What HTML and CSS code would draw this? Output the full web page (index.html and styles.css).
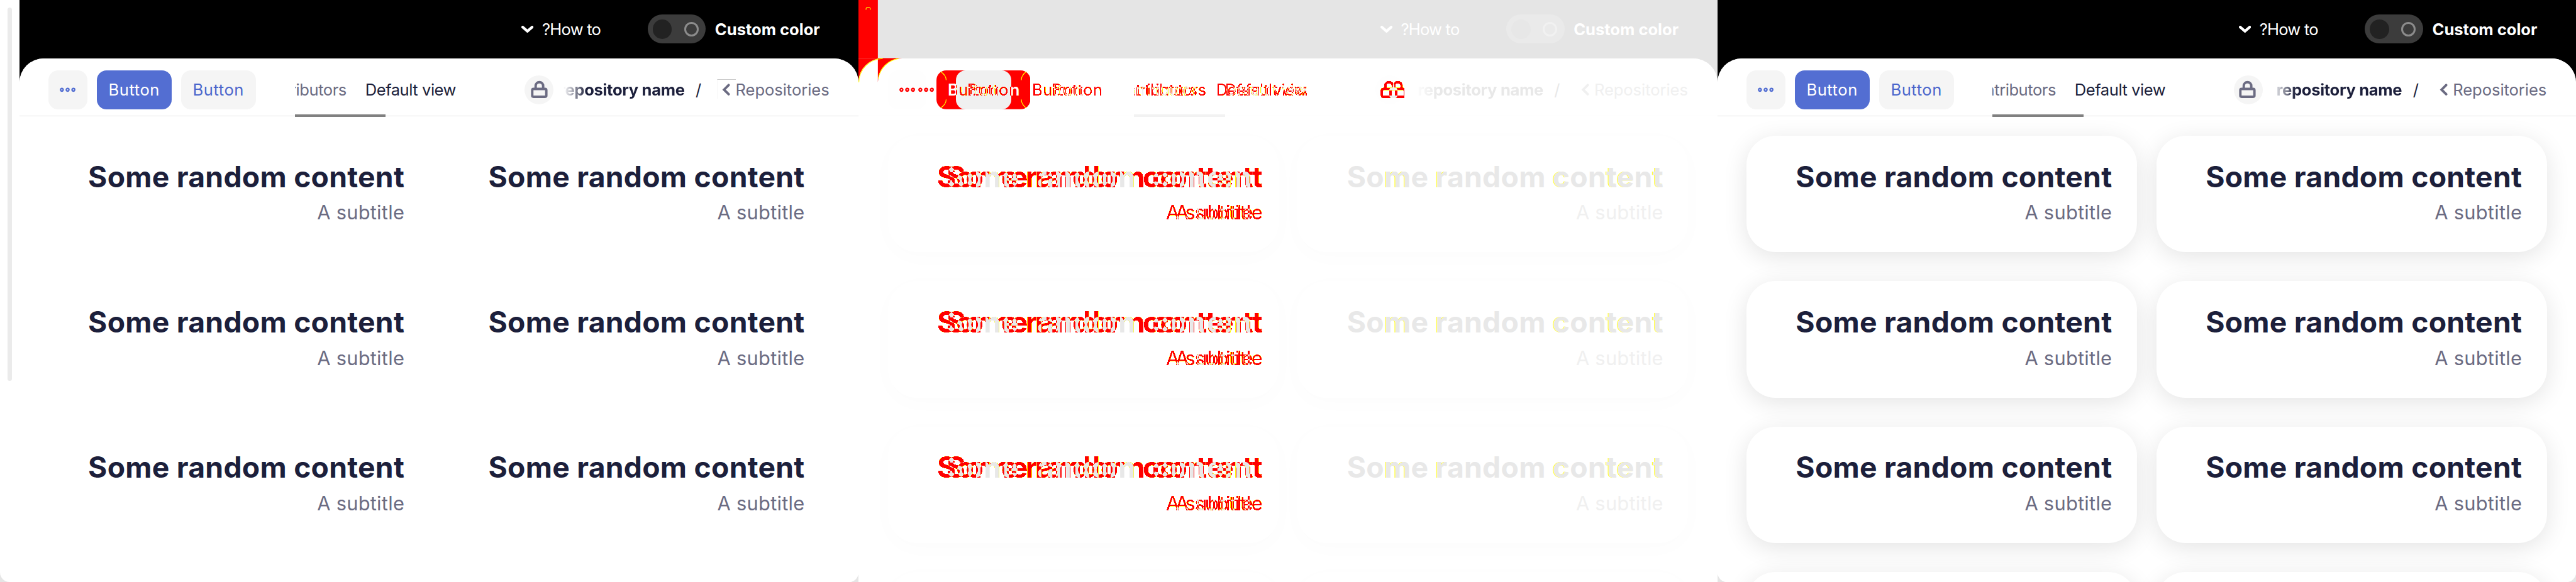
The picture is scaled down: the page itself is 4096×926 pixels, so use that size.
FILE: index.html
```html
<!DOCTYPE html>
<html lang="en">
<head>
<meta charset="utf-8">
<title>Layout comparison</title>
<link rel="stylesheet" href="styles.css">
</head>
<body>
<svg class="defs" width="0" height="0" aria-hidden="true">
  <defs>
    <symbol id="down" viewBox="0 0 20 12"><path d="M2.2 2.2L10 9L17.8 2.2" fill="none" stroke="currentColor" stroke-width="4.4" stroke-linecap="round"/></symbol>
    <symbol id="back" viewBox="0 0 14 20"><path d="M11 2.4L3.4 10L11 17.6" fill="none" stroke="currentColor" stroke-width="4" stroke-linecap="round"/></symbol>
    <symbol id="lock" viewBox="0 0 28 30"><path d="M8 13V9a6.2 6.2 0 0 1 12.4 0v4" fill="none" stroke="currentColor" stroke-width="4"/><rect x="2.4" y="14" width="23.2" height="13" rx="2" fill="none" stroke="currentColor" stroke-width="4"/></symbol>
    <symbol id="dots" viewBox="0 0 26 8"><g fill="none" stroke="currentColor" stroke-width="2.4"><circle cx="3.5" cy="4" r="2.2"/><circle cx="13" cy="4" r="2.2"/><circle cx="22.5" cy="4" r="2.2"/></g></symbol>
    <filter id="g14" x="-20%" y="-30%" width="160%" height="160%" color-interpolation-filters="sRGB">
      <feOffset in="SourceAlpha" dx="13.5" result="b"/><feComposite in="SourceAlpha" in2="b" operator="xor" result="x"/>
      <feComponentTransfer in="x" result="xe"><feFuncA type="discrete" tableValues="0 0 1 1 1"/></feComponentTransfer><feFlood flood-color="#ff0"/><feComposite in2="xe" operator="in" result="y"/>
      <feComponentTransfer in="x" result="xs"><feFuncA type="discrete" tableValues="0 0 0 1 1"/></feComponentTransfer><feFlood flood-color="#f00"/><feComposite in2="xs" operator="in" result="r"/>
      <feComposite in="SourceAlpha" in2="b" operator="in" result="i"/><feFlood flood-color="#f0f0f0"/><feComposite in2="i" operator="in" result="o"/>
      <feMerge><feMergeNode in="y"/><feMergeNode in="r"/><feMergeNode in="o"/></feMerge>
    </filter>
    <filter id="g16" x="-20%" y="-30%" width="160%" height="160%" color-interpolation-filters="sRGB">
      <feOffset in="SourceAlpha" dx="15.4" result="b"/><feComposite in="SourceAlpha" in2="b" operator="xor" result="x"/>
      <feComponentTransfer in="x" result="xe"><feFuncA type="discrete" tableValues="0 0 1 1 1"/></feComponentTransfer><feFlood flood-color="#ff0"/><feComposite in2="xe" operator="in" result="y"/>
      <feComponentTransfer in="x" result="xs"><feFuncA type="discrete" tableValues="0 0 0 1 1"/></feComponentTransfer><feFlood flood-color="#f00"/><feComposite in2="xs" operator="in" result="r"/>
      <feComposite in="SourceAlpha" in2="b" operator="in" result="i"/><feFlood flood-color="#e8e8e8"/><feComposite in2="i" operator="in" result="o"/>
      <feMerge><feMergeNode in="y"/><feMergeNode in="r"/><feMergeNode in="o"/></feMerge>
    </filter>
    <filter id="g32" x="-20%" y="-30%" width="180%" height="160%" color-interpolation-filters="sRGB">
      <feOffset in="SourceAlpha" dx="30.9" result="b"/><feComposite in="SourceAlpha" in2="b" operator="xor" result="x"/>
      <feComponentTransfer in="x" result="xe"><feFuncA type="discrete" tableValues="0 0 1 1 1"/></feComponentTransfer><feFlood flood-color="#ff0"/><feComposite in2="xe" operator="in" result="y"/>
      <feComponentTransfer in="x" result="xs"><feFuncA type="discrete" tableValues="0 0 0 1 1"/></feComponentTransfer><feFlood flood-color="#f00"/><feComposite in2="xs" operator="in" result="r"/>
      <feComposite in="SourceAlpha" in2="b" operator="in" result="i"/><feFlood flood-color="#f8f8f8"/><feComposite in2="i" operator="in" result="o"/>
      <feMerge><feMergeNode in="y"/><feMergeNode in="r"/><feMergeNode in="o"/></feMerge>
    </filter>
  </defs>
</svg>

<main class="board">
  <section class="panel before">
    <div class="gutter"><div class="thumb"></div></div>
    <div class="frame">
      <header class="top">
        <svg class="i-down"><use href="#down"/></svg><span class="howto">?How to</span>
        <span class="toggle"><i class="knob"></i><i class="ring"></i></span><b class="custom">Custom color</b>
      </header>
      <div class="surface">
        <nav class="bar">
          <span class="btn more"><svg class="i-dots"><use href="#dots"/></svg></span>
          <span class="btn primary">Button</span>
          <span class="btn">Button</span>
          <div class="tabs"><div class="clip"><span class="tab muted">Contributors</span><span class="tab deft">Default view</span></div><i class="mark"></i></div>
          <span class="badge"><svg class="i-lock"><use href="#lock"/></svg></span>
          <div class="repo"><b>repository name</b></div>
          <span class="slash">/</span>
          <span class="crumb"><i class="trace"></i><svg class="i-back"><use href="#back"/></svg>Repositories</span>
        </nav>
        <div class="grid">
          <article class="card"><h2>Some random content</h2><p>A subtitle</p></article>
          <article class="card"><h2>Some random content</h2><p>A subtitle</p></article>
          <article class="card"><h2>Some random content</h2><p>A subtitle</p></article>
          <article class="card"><h2>Some random content</h2><p>A subtitle</p></article>
          <article class="card"><h2>Some random content</h2><p>A subtitle</p></article>
          <article class="card"><h2>Some random content</h2><p>A subtitle</p></article>
        </div>
      </div>
    </div>
  </section>

  <section class="panel diff">
    <svg class="strip" viewBox="0 0 72 136">
      <path d="M0 0H32V96H0z" fill="#f00"/>
      <path d="M0 96H40A40 40 0 0 0 0 136z" fill="#f00"/>
      <path d="M32 96H72A40 40 0 0 0 32 136V96.8z" fill="#f00"/>
      <path d="M0.6 136A40 40 0 0 1 40 96.6M32.6 130A40 40 0 0 1 66 96.6M12.5 16V14.5Q12.5 12.6 14.5 12.6H17.5Q19.5 12.6 19.5 14.5V16" fill="none" stroke="#ff0" stroke-width="1.2"/>
    </svg>
    <div class="frame">
      <header class="top">
        <svg class="i-down"><use href="#down"/></svg><span class="howto">?How to</span>
        <span class="toggle"><i class="knob"></i><i class="ring"></i></span><b class="custom">Custom color</b>
      </header>
      <div class="surface">
        <nav class="bar">
          <span class="btn more"><svg class="i-dots"><use href="#dots"/></svg></span>
          <span class="btn primary"><svg class="union" viewBox="0 0 155 64"><rect width="155" height="64" rx="16" fill="#f00"/><path d="M7 2Q16 8 16 16M16 48Q16 56 7 62M148 2Q140 8 140 16M140 48Q140 56 148 62" fill="none" stroke="#ff0" stroke-width="1.2"/></svg><span class="white one">Button</span><span class="white two">Button</span><span class="overlap"><span class="ghost32">Button</span></span></span>
          <span class="btn"><span class="ghost32">Button</span></span>
          <div class="tabs"><div class="clip"><span class="tab muted ghost14">Contributors</span><span class="tab deft ghost14">Default view</span></div><i class="mark"></i></div>
          <span class="badge"><svg class="i-lock ghost14"><use href="#lock"/></svg></span>
          <div class="repo"><b>repository name</b></div>
          <span class="slash">/</span>
          <span class="crumb"><svg class="i-back"><use href="#back"/></svg>Repositories</span>
        </nav>
        <div class="grid">
          <article class="card"><h2 class="ghost16">Some random content</h2><p class="ghost16">A subtitle</p></article>
          <article class="card"><h2>So<em>m</em>e <em>r</em>andom <em>c</em>on<em>te</em>n<em>t</em></h2><p>A subtitle</p></article>
          <article class="card"><h2 class="ghost16">Some random content</h2><p class="ghost16">A subtitle</p></article>
          <article class="card"><h2>So<em>m</em>e <em>r</em>andom <em>c</em>on<em>te</em>n<em>t</em></h2><p>A subtitle</p></article>
          <article class="card"><h2 class="ghost16">Some random content</h2><p class="ghost16">A subtitle</p></article>
          <article class="card"><h2>So<em>m</em>e <em>r</em>andom <em>c</em>on<em>te</em>n<em>t</em></h2><p>A subtitle</p></article>
          <article class="card"></article>
          <article class="card"></article>
        </div>
      </div>
    </div>
  </section>

  <section class="panel after">
    <div class="frame">
      <header class="top">
        <svg class="i-down"><use href="#down"/></svg><span class="howto">?How to</span>
        <span class="toggle"><i class="knob"></i><i class="ring"></i></span><b class="custom">Custom color</b>
      </header>
      <div class="surface">
        <nav class="bar">
          <span class="btn more"><svg class="i-dots"><use href="#dots"/></svg></span>
          <span class="btn primary">Button</span>
          <span class="btn">Button</span>
          <div class="tabs"><div class="clip"><span class="tab muted">Contributors</span><span class="tab deft">Default view</span></div><i class="mark"></i></div>
          <span class="badge"><svg class="i-lock"><use href="#lock"/></svg></span>
          <div class="repo"><b>repository name</b></div>
          <span class="slash">/</span>
          <span class="crumb"><svg class="i-back"><use href="#back"/></svg>Repositories</span>
        </nav>
        <div class="grid">
          <article class="card"><h2>Some random content</h2><p>A subtitle</p></article>
          <article class="card"><h2>Some random content</h2><p>A subtitle</p></article>
          <article class="card"><h2>Some random content</h2><p>A subtitle</p></article>
          <article class="card"><h2>Some random content</h2><p>A subtitle</p></article>
          <article class="card"><h2>Some random content</h2><p>A subtitle</p></article>
          <article class="card"><h2>Some random content</h2><p>A subtitle</p></article>
          <article class="card"></article>
          <article class="card"></article>
        </div>
      </div>
    </div>
  </section>
</main>
</body>
</html>
```
FILE: styles.css
```css
* { box-sizing: border-box; }
html { font-size: 9.6422px; }
body { margin: 0; overflow: hidden; background: #e5e5e5; font-family: Inter, "Open Sans", sans-serif; font-size: 2.65rem; color: #1c1f3b; white-space: nowrap; }
svg { display: block; flex: none; }
i, em { font-style: normal; }
.defs { position: absolute; }
.board { display: flex; width: 424.8rem; height: 96.1rem; overflow: hidden; }

.panel { position: relative; flex: none; display: flex; width: 141.6rem; height: 96rem; overflow: hidden; background: #fff; }
.before, .after { border-radius: 0 0 1.6rem 1.6rem; }
.gutter { flex: none; width: 3.2rem; padding: 1.2rem; }
.thumb { width: .8rem; height: 61.6rem; border-radius: .4rem; background: #ebebeb; }
.frame { flex: 1; min-width: 0; display: flex; flex-direction: column; background: linear-gradient(#000 14rem, #fff 14rem); }

.top { flex: none; display: flex; align-items: center; justify-content: flex-end; height: 9.6rem; padding-right: 6.3rem; color: #fff; }
.i-down { width: 2rem; height: 1.2rem; margin-right: 1.4rem; }
.howto { width: 9.7rem; letter-spacing: -.03em; }
.toggle { display: flex; align-items: center; justify-content: space-between; width: 9.6rem; height: 4.8rem; margin: 0 1.5rem 0 7.7rem; padding: 0 1.2rem 0 .8rem; border-radius: 2.4rem; background: #3c3c3c; }
.knob { width: 3.2rem; height: 3.2rem; border-radius: 50%; background: #222; }
.ring { width: 2.4rem; height: 2.4rem; border-radius: 50%; border: .4rem solid #8c8c8c; }
.custom { width: 17.4rem; letter-spacing: 0; }

.surface { flex: 1; overflow: hidden; border-radius: 4rem 4rem 0 0; background: #fff; }
.bar { position: relative; z-index: 1; display: flex; height: 9.6rem; padding: 2rem 4.7rem 0 4.8rem; border-bottom: .2rem solid #e5e5e5; background: #fff; line-height: 6.4rem; }
.btn { flex: none; position: relative; width: 12.3rem; height: 6.4rem; margin-right: 1.6rem; padding-left: 1.9rem; border-radius: 1.6rem; background: #f5f5f5; color: #4a66cc; letter-spacing: .022em; }
.btn.more { display: flex; align-items: center; justify-content: center; width: 6.4rem; padding: 0; color: #536ed2; }
.btn.primary { background: #536ed2; color: #fff; }
.i-dots { width: 2.6rem; height: .8rem; }
.tabs { flex: none; position: relative; width: 26.6rem; margin: 0 11.3rem 0 4.8rem; }
.after .tabs, .diff .tabs { width: 28.5rem; }
.clip { display: flex; justify-content: flex-end; gap: 3.1rem; height: 6.4rem; overflow: hidden; }
.tab { flex: none; letter-spacing: -.018em; }
.muted { color: #6b6b82; }
.mark { position: absolute; left: 0; bottom: -.2rem; width: 15rem; height: .4rem; background: #808080; }
.badge { flex: none; display: flex; align-items: center; justify-content: center; width: 4.8rem; height: 4.8rem; margin: .8rem 1.6rem 0 0; border-radius: 50%; background: #f5f5f5; color: #6b6b82; }
.i-lock { width: 2.8rem; height: 3rem; }
.after .i-lock, .diff .i-lock { margin-right: .34rem; }
.repo { flex: 1; display: flex; justify-content: flex-end; height: 6.4rem; overflow: hidden; letter-spacing: -.012em; -webkit-mask-image: linear-gradient(90deg, transparent, #000 3.8rem); mask-image: linear-gradient(90deg, transparent, #000 3.8rem); }
.slash { flex: none; width: 1.1rem; margin: 0 3.3rem 0 1.8rem; }
.crumb { flex: none; position: relative; display: flex; align-items: center; width: 17.8rem; height: 6.4rem; color: #6b6b82; letter-spacing: -.002em; }
.i-back { width: 1.4rem; height: 2rem; margin-right: .8rem; }
.trace { position: absolute; left: -.9rem; top: 1.5rem; width: 3.1rem; height: 3.2rem; border-top: 1px solid #ccc; border-left: 1px solid #f7f7f7; }

.grid { display: grid; grid-template-columns: 1fr 1fr; grid-auto-rows: 19.2rem; gap: 4.8rem 3.2rem; padding: 3.2rem 4.8rem 0; }
.card { padding: 3.9rem 4.1rem 0; border-radius: 4.8rem; background: #fff; text-align: right; }
.after .card { box-shadow: 0 .8rem 4rem rgba(0, 0, 0, .11); }
.card h2 { margin: 0; font-size: 4.8rem; line-height: 5.6rem; font-weight: 700; letter-spacing: .0055em; }
.card p { margin: 1.2rem 0 0; font-size: 3.2rem; line-height: 4rem; color: #6b6b82; letter-spacing: .008em; }

/* Pixel difference panel */
.diff { color: #e8e8e8; }
.diff .frame { background: linear-gradient(#e5e5e5 14rem, #fff 14rem); }
.diff .toggle { background: #eaeaea; }
.diff .knob { background: #e7e7e7; }
.diff .ring { border-color: #f1f1f1; }
.diff .bar { border-bottom-color: #fcfcfc; }
.diff .surface, .diff .bar, .diff .btn, .diff .badge { background: #fff; }
.diff .btn.more, .diff .badge { background: #fefefe; }
.diff .mark { background: #f2f2f2; }
.diff .crumb, .diff .card p { color: #f0f0f0; }
.diff .card { box-shadow: 0 .8rem 4rem rgba(0, 0, 0, .014); }
.diff em { text-shadow: -1px 0 #ff0; }
.strip { position: absolute; z-index: 2; left: 0; top: 0; width: 7.2rem; height: 13.6rem; }
.union { position: absolute; left: 0; top: 0; width: 15.5rem; height: 6.4rem; }
.diff .btn.primary { z-index: 1; background: none; }
.white { position: absolute; top: 0; color: #fff; font-weight: 600; }
.one { left: 1.9rem; }
.two { left: 5.1rem; }
.overlap { position: absolute; left: 3.2rem; top: 0; width: 9.2rem; height: 6.4rem; overflow: hidden; border-radius: 1.6rem; background: #f0f0f0; }
.overlap .ghost32 { position: absolute; left: -1.3rem; top: 0; }
.btn > .ghost32 { display: inline-block; }
.ghost14 { filter: url(#g14); }
.ghost16 { filter: url(#g16); }
.ghost32 { filter: url(#g32); }
.diff .i-dots { color: #f00; filter: drop-shadow(3.2rem 0 #f00); }
```
